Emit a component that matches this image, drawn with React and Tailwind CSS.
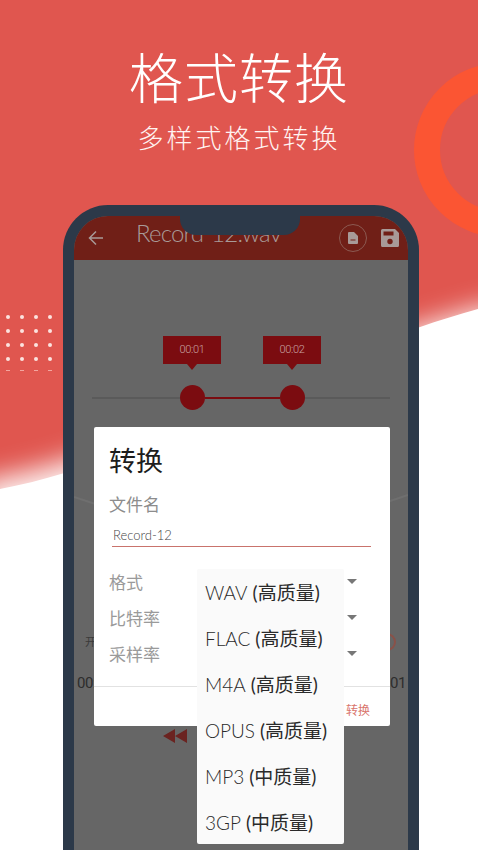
const FONT = "font-['Lato','Noto_Sans_CJK_SC',sans-serif]";

const options = [
  ['WAV', '(高质量)'],
  ['FLAC', '(高质量)'],
  ['M4A', '(高质量)'],
  ['OPUS', '(高质量)'],
  ['MP3', '(中质量)'],
  ['3GP', '(中质量)'],
];
const rows = ['格式', '比特率', '采样率'];

const WAVE = 'M0 489 C 150 462 300 358 478 309 L 478 850 L 0 850 Z';

const Backdrop = () => (
  <svg className="absolute inset-0" width="478" height="850" viewBox="0 0 478 850">
    <defs>
      <filter id="soft" x="-20%" y="-20%" width="140%" height="140%">
        <feGaussianBlur stdDeviation="13" />
      </filter>
      <clipPath id="page">
        <rect width="478" height="850" />
      </clipPath>
    </defs>
    <rect width="478" height="850" fill="#e0564f" />
    <circle cx="501" cy="150" r="74" fill="none" stroke="#fb5533" strokeWidth="26" />
    <g clipPath="url(#page)">
      <path d={WAVE} fill="#fff" filter="url(#soft)" opacity="0.9" transform="translate(0 -8) scale(1.1 1) translate(-20 0)" />
    </g>
    <path d={WAVE} fill="#fff" />
  </svg>
);

const Dots = () => (
  <div className="absolute left-[6px] top-[315px] grid grid-cols-4 gap-x-[10px] gap-y-[10px]">
    {Array.from({ length: 16 }).map((_, i) => (
      <span key={i} className="w-1 h-1 rounded-full bg-[#fbe3df]" />
    ))}
    {Array.from({ length: 4 }).map((_, i) => (
      <span key={i} className="w-1 h-px mt-[-1px] bg-[#f3a59f]" />
    ))}
  </div>
);

const Tip = ({ label }) => (
  <div className="relative w-[58px] h-[28px] flex items-center justify-center bg-[#7b0c10] font-['Roboto',sans-serif] text-[11px] tracking-[-0.3px] text-[#c9a3a3] font-light">
    {label}
    <span className="absolute left-[24px] top-[28px] w-0 h-0 border-x-[5px] border-x-transparent border-t-[6px] border-t-[#7b0c10]" />
  </div>
);

const Screen = () => (
  <div className="relative w-[334px] h-[690px] overflow-hidden rounded-t-[34px] bg-[#666666]">
    {/* top bar */}
    <div className="relative flex items-center h-[44px] bg-[#701f17] text-[#a89a98]">
      <svg className="ml-[14px]" width="16" height="16" viewBox="0 0 16 16" fill="none" stroke="currentColor" strokeWidth="1.5">
        <path d="M15 8H1.500M8 1.500 1.500 8 8 14.500" />
      </svg>
      <span className="ml-[32px] mb-[10px] text-[24px] font-light leading-none tracking-[-0.8px]">Record-12.wav</span>
      <div className="ml-auto mr-[9px] flex items-center gap-[14px]">
        <span className="w-[28px] h-[28px] rounded-full border border-[#8c5a52] flex items-center justify-center">
          <svg width="10" height="12" viewBox="0 0 10 12" fill="#a89a98">
            <path d="M0 1a1 1 0 0 1 1-1h5l4 4v7a1 1 0 0 1-1 1H1a1 1 0 0 1-1-1Z" />
            <path d="M2.500 8h5" stroke="#701f17" strokeWidth="1" />
          </svg>
        </span>
        <svg width="18" height="18" viewBox="0 0 18 18">
          <path d="M1.500 0H14l4 4v12.500a1.500 1.500 0 0 1-1.500 1.500h-15A1.500 1.500 0 0 1 0 16.500V1.500A1.500 1.500 0 0 1 1.500 0Z" fill="#a89a98" />
          <rect x="2.500" y="2.500" width="10" height="4" fill="#701f17" />
          <circle cx="9" cy="12.500" r="2.700" fill="#701f17" />
        </svg>
      </div>
      <div className="absolute left-[106px] top-0 w-[120px] h-[19px] rounded-b-[16px] bg-[#2c3949]" />
    </div>

    {/* trim slider */}
    <div className="mt-[76px] ml-[89px] flex gap-[42px]">
      <Tip label="00:01" />
      <Tip label="00:02" />
    </div>
    <div className="mt-[21px] mx-[18px] flex items-center">
      <span className="w-[88px] h-[2px] bg-[#5a5a5a]" />
      <span className="w-[25px] h-[25px] rounded-full bg-[#7b0c10]" />
      <span className="w-[75px] h-[2px] bg-[#7b0c10]" />
      <span className="w-[25px] h-[25px] rounded-full bg-[#7b0c10]" />
      <span className="flex-1 h-[2px] bg-[#5a5a5a]" />
    </div>

    {/* faint arc behind the dialog */}
    <svg className="absolute left-0 top-[270px]" width="334" height="40" viewBox="0 0 334 40" fill="none" stroke="#6f6f6f" strokeWidth="2">
      <path d="M0 11 Q 167 70 334 9" />
    </svg>

    {/* things showing around the dialog */}
    <div className="relative mt-[223px] ml-[11px] mr-[12px] flex items-center justify-between text-[11px] text-[#3a3a3a]">
      <span>开</span>
      <span className="w-[18px] h-[18px] rounded-full border-2 border-[#8a5148]" />
    </div>
    <div className="relative mt-[22px] ml-[3px] mr-[2px] flex justify-between font-['Roboto',sans-serif] text-[15px] tracking-[-0.4px] leading-5 text-[#2d2d2d]">
      <span>00:</span>
      <span>:01</span>
    </div>
    <svg className="mt-[36px] ml-[89px]" width="24" height="14" viewBox="0 0 24 14" fill="#6b2320">
      <path d="M12 0v14L0 7ZM24 0v14L12 7Z" />
    </svg>

    {/* convert dialog */}
    <div className="absolute left-[20px] top-[211px] w-[296px] h-[299px] rounded-[2px] bg-white">
      <h2 className="mt-[17px] ml-[15px] text-[27px] leading-[34px] text-[#1d1d1d]">转换</h2>
      <p className="mt-[15px] ml-[15px] text-[17px] leading-[24px] text-[#8c8c8c]">文件名</p>
      <div className="mt-[8px] ml-[18px] mr-[19px] h-[22px] pl-px border-b border-[#c9736c] text-[13px] leading-[20px] text-[#444] font-light">
        Record-12
      </div>
      <div className="mt-[18px] flex flex-col">
        {rows.map((r) => (
          <div key={r} className="flex items-center h-[36px] pl-[15px] pr-[33px] text-[17px] text-[#9a9a9a]">
            <span>{r}</span>
            <span className="ml-auto mb-[4px] w-0 h-0 border-x-[5px] border-x-transparent border-t-[5px] border-t-[#777]" />
          </div>
        ))}
      </div>
      <div className="mt-[13px] h-px bg-[#e2e2e2]" />
      <div className="mt-[16px] pr-[20px] text-right text-[12px] leading-4 text-[#d9756c]">转换</div>

      <ul className="absolute left-[103px] top-[142px] w-[147px] h-[275px] pt-[1px] rounded-[2px] bg-[#fafafa] text-[19px] text-[#2a2a2a]">
        {options.map(([name, quality]) => (
          <li key={name} className="h-[46px] pl-[8px] flex items-center gap-[5px] whitespace-nowrap">
            <span className="font-light">{name}</span>
            <span>{quality}</span>
          </li>
        ))}
      </ul>
    </div>
  </div>
);

export default function App() {
  return (
    <div className={`relative w-[478px] h-[850px] overflow-hidden ${FONT}`}>
      <Backdrop />
      <Dots />
      <div className="relative flex flex-col items-center text-white">
        <h1 className="mt-[43px] text-[54px] leading-[72px] font-light tracking-[1px]">格式转换</h1>
        <p className="mt-[5px] text-[26px] leading-[36px] font-light tracking-[3px] text-[#fff3f1]">多样式格式转换</p>
        <div className="mt-[49px] ml-[4px] p-[11px] pb-0 rounded-t-[45px] bg-[#2c3949]">
          <Screen />
        </div>
      </div>
    </div>
  );
}
